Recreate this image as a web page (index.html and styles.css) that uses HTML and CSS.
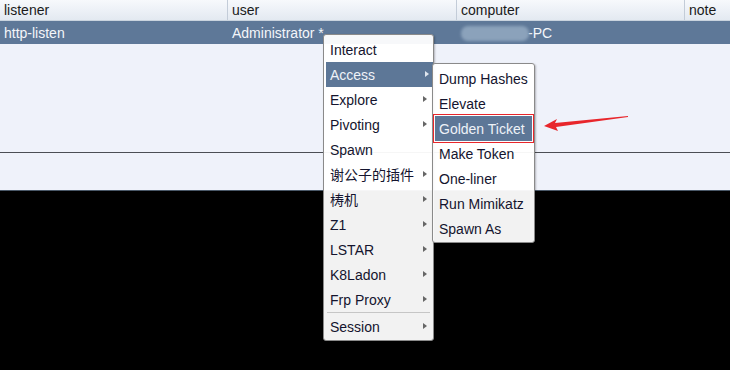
FILE: index.html
```html
<!DOCTYPE html>
<html>
<head>
    <meta charset="UTF-8">
    <title>Beacons</title>
    <link rel="stylesheet" href="styles.css">
</head>
<body>
    <div class="app">
        <!-- tabella sessioni -->
        <div class="table">
            <div class="thead">
                <div class="th">listener</div>
                <div class="th">user</div>
                <div class="th">computer</div>
                <div class="th">note</div>
            </div>
            <div class="row selected">
                <div class="td">http-listen</div>
                <div class="td">Administrator *</div>
                <div class="td"><span class="masked"></span>-PC</div>
                <div class="td"></div>
            </div>
        </div>
        <div class="tabs"></div>
        <div class="console"></div>
    </div>

    <!-- menu contestuale -->
    <div class="menu main-menu">
        <div class="item">Interact</div>
        <div class="item active sub">Access</div>
        <div class="item sub">Explore</div>
        <div class="item sub">Pivoting</div>
        <div class="item">Spawn</div>
        <div class="item sub">谢公子的插件</div>
        <div class="item sub">梼机</div>
        <div class="item sub">Z1</div>
        <div class="item sub">LSTAR</div>
        <div class="item sub">K8Ladon</div>
        <div class="item sub">Frp Proxy</div>
        <div class="sep"></div>
        <div class="item sub">Session</div>
    </div>

    <div class="menu sub-menu">
        <div class="item">Dump Hashes</div>
        <div class="item">Elevate</div>
        <div class="item active marked">Golden Ticket</div>
        <div class="item">Make Token</div>
        <div class="item">One-liner</div>
        <div class="item">Run Mimikatz</div>
        <div class="item">Spawn As</div>
    </div>

    <svg class="pointer" width="90" height="20" viewBox="0 0 90 20">
        <polygon points="2,13 15,6 13,10 86,3 86,4 14,14 16,18" fill="#e8262b"/>
    </svg>
</body>
</html>
```

FILE: styles.css
```css
body {
    margin: 0;
    width: 730px;
    height: 370px;
    overflow: hidden;
    font-family: "Liberation Sans", Arial, "Noto Sans CJK SC", sans-serif;
    font-size: 14px;
    background: #000;
}
.app {
    display: flex;
    flex-direction: column;
    height: 370px;
}
.table {
    height: 152px;
    background: #eff2fa;
}
.thead, .row {
    display: grid;
    grid-template-columns: 228px 229px 228px 1fr;
}
.thead {
    height: 20px;
    background: linear-gradient(#f7f9fc, #e3e9f1);
    border-bottom: 1px solid #c9d3de;
}
.th {
    padding-left: 4px;
    line-height: 20px;
    color: #1a1a1a;
    border-right: 1px solid #c3ccd8;
}
.th:last-child {
    border-right: none;
}
.row {
    height: 23px;
}
.row.selected {
    background: #5e7898;
    color: #f4f6fa;
}
.td {
    padding-left: 4px;
    line-height: 25px;
    white-space: nowrap;
}
.masked {
    display: inline-block;
    width: 68px;
    height: 15px;
    margin-right: -1px;
    vertical-align: -3px;
    border-radius: 7px;
    background: #8ba2bb;
    filter: blur(1.5px);
}
.tabs {
    height: 37px;
    background: #eff2fa;
    border-top: 1px solid #4b4e54;
    border-bottom: 1px solid #4a5868;
}
.console {
    flex: 1;
    background: #000;
}

.menu {
    position: absolute;
    box-sizing: border-box;
    padding: 2px 2px;
    background: rgba(255, 255, 255, 0.95);
    border: 1px solid #8a8a8a;
    border-radius: 3px;
    box-shadow: 1px 1px 2px rgba(0, 0, 0, 0.25);
}
.main-menu {
    left: 323px;
    top: 34px;
    width: 111px;
    height: 307px;
}
.sub-menu {
    left: 432px;
    top: 63px;
    width: 103px;
    height: 180px;
}
.item {
    position: relative;
    height: 25px;
    line-height: 26px;
    padding-left: 4px;
    color: #14142e;
    white-space: nowrap;
}
.item.active {
    background: #5d7797;
    color: #eef2f7;
}
.sub::after {
    content: "";
    position: absolute;
    right: 4px;
    top: 9px;
    border-left: 4px solid #666;
    border-top: 3.5px solid transparent;
    border-bottom: 3.5px solid transparent;
}
.item.active.sub::after {
    border-left-color: #e0e6ee;
}
.main-menu .item.active {
    margin-right: -2px;
}
.marked {
    outline: 1px solid #e8262b;
    outline-offset: 1px;
}
.sep {
    height: 1px;
    margin: 0 1px 1px;
    background: #c6c6c6;
}
.pointer {
    position: absolute;
    left: 542px;
    top: 113px;
}
```
